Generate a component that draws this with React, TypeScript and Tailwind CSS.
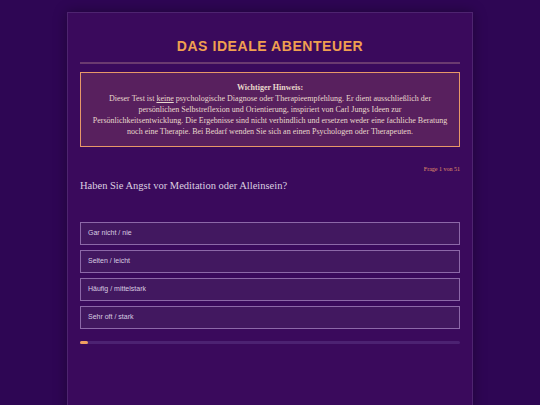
export default function App() {
  const options = ["Gar nicht / nie", "Selten / leicht", "Häufig / mittelstark", "Sehr oft / stark"]
  return (
    <div className="min-h-[405px] w-full bg-[#2e0654] flex justify-center pt-[12px] overflow-hidden">
      <div className="w-[406px] h-[400px] bg-[#3a0a5c] border border-[#4e2470] shadow-[0_0_12px_rgba(0,0,0,0.35)] px-[12px] pt-[24px]">
        <h1 className="text-center text-[14px] font-bold tracking-[0.04em] text-[#f0a050] leading-[18px] [font-family:'Liberation_Sans',Arial,sans-serif]">
          DAS IDEALE ABENTEUER
        </h1>
        <div className="mt-[7px] h-[2px] bg-[#6a3a70]" />
        <div className="mt-[8px] border border-[#e89868] bg-[#58205e] px-[6px] pt-[9px] pb-[9px] text-center text-[8px] leading-[11px] text-[#e8d8cc] whitespace-nowrap [font-family:'Liberation_Serif','Times_New_Roman',serif]">
          <div className="font-bold">Wichtiger Hinweis:</div>
          <div>
            Dieser Test ist <span className="underline">keine</span> psychologische Diagnose oder Therapieempfehlung. Er dient ausschließlich der
            <br />
            persönlichen Selbstreflexion und Orientierung, inspiriert von Carl Jungs Ideen zur
            <br />
            Persönlichkeitsentwicklung. Die Ergebnisse sind nicht verbindlich und ersetzen weder eine fachliche Beratung
            <br />
            noch eine Therapie. Bei Bedarf wenden Sie sich an einen Psychologen oder Therapeuten.
          </div>
        </div>
        <div className="mt-[18px] text-right text-[6px] leading-[8px] text-[#e0906a] [font-family:'Liberation_Serif',serif]">
          Frage 1 von 51
        </div>
        <div className="mt-[6px] text-[10.5px] leading-[14px] text-[#dccfe0] [font-family:'Liberation_Serif',serif]">
          Haben Sie Angst vor Meditation oder Alleinsein?
        </div>
        <div className="mt-[29px] flex flex-col gap-[5px]">
          {options.map((o) => (
            <div
              key={o}
              className="h-[23px] border border-[#8c68a8] bg-[#421860] px-[7px] flex items-center text-[7px] text-[#d8cce0] [font-family:'Liberation_Sans',Arial,sans-serif]"
            >
              {o}
            </div>
          ))}
        </div>
        <div className="mt-[12px] h-[3px] bg-[#4c2272] rounded-full">
          <div className="h-full w-[2%] bg-[#f0a060] rounded-full" />
        </div>
      </div>
    </div>
  )
}
